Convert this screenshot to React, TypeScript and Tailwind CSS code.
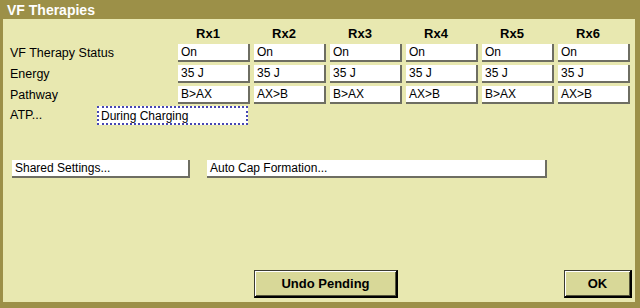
import React from "react";

const font = { fontFamily: '"Liberation Sans", Arial, sans-serif' };

const cols = ["Rx1", "Rx2", "Rx3", "Rx4", "Rx5", "Rx6"];
const rows: { label: string; values: string[] }[] = [
  { label: "VF Therapy Status", values: ["On", "On", "On", "On", "On", "On"] },
  { label: "Energy", values: ["35 J", "35 J", "35 J", "35 J", "35 J", "35 J"] },
  { label: "Pathway", values: ["B>AX", "AX>B", "B>AX", "AX>B", "B>AX", "AX>B"] },
];

function Field({ children }: { children: React.ReactNode }) {
  return (
    <div className="h-[18px] bg-white border-r-2 border-b-2 border-[#6e6e62] pl-[3px] flex items-center text-[12px] text-black leading-none">
      {children}
    </div>
  );
}

export default function App() {
  return (
    <div style={font} className="w-[640px] h-[308px] bg-[#9c9048] flex flex-col overflow-hidden">
      <div className="h-[19px] flex items-center pl-[7px] pt-[1px] text-white font-bold text-[14px] leading-none">
        VF Therapies
      </div>
      <div className="flex-1 ml-[3px] mr-[5px] mb-[6px] bg-[#e8e8b0] flex flex-col pt-[7px] pb-[4px]">
        <div className="grid grid-cols-[164px_repeat(6,72px)] gap-x-[4px] pl-[7px]">
          <div className="h-[14px]" />
          {cols.map((c) => (
            <div key={c} className="h-[14px] flex items-center justify-center pr-[12px] font-bold text-[13px] leading-none text-black">
              {c}
            </div>
          ))}
        </div>
        <div className="grid grid-cols-[164px_repeat(6,72px)] gap-x-[4px] gap-y-[3px] pl-[7px] mt-[4px]">
          {rows.map((r) => (
            <React.Fragment key={r.label}>
              <div className="h-[18px] flex items-center text-[12.5px] text-black leading-none">{r.label}</div>
              {r.values.map((v, i) => (
                <Field key={i}>{v}</Field>
              ))}
            </React.Fragment>
          ))}
        </div>
        <div className="flex items-center pl-[7px] mt-[2px]">
          <div className="w-[87px] text-[12.5px] text-black leading-none">ATP...</div>
          <div className="w-[151px] h-[19px] bg-white border-2 border-dotted border-[#4646b4] pl-[2px] flex items-center text-[12px] text-black leading-none">
            During Charging
          </div>
        </div>
        <div className="flex items-center pl-[9px] mt-[35px] gap-[17px]">
          <div className="w-[178px] h-[18px] bg-white border-r-2 border-b-2 border-[#6e6e62] pl-[3px] flex items-center text-[12px] text-black leading-none">
            Shared Settings...
          </div>
          <div className="w-[340px] h-[18px] bg-white border-r-2 border-b-2 border-[#6e6e62] pl-[3px] flex items-center text-[12px] text-black leading-none">
            Auto Cap Formation...
          </div>
        </div>
        <div className="flex-1" />
        <div className="flex items-end pr-[3px]">
          <div className="ml-[251px] w-[144px] h-[28px] bg-[#d8d898] border border-[#3a3a30] border-r-2 border-b-2 border-r-black border-b-black shadow-[inset_1px_1px_0_#ffffff,inset_-1px_-1px_0_#55553a] flex items-center justify-center font-bold text-[13px] text-black leading-none">
            Undo Pending
          </div>
          <div className="flex-1" />
          <div className="w-[68px] h-[28px] bg-[#d8d898] border border-[#3a3a30] border-r-2 border-b-2 border-r-black border-b-black shadow-[inset_1px_1px_0_#ffffff,inset_-1px_-1px_0_#55553a] flex items-center justify-center font-bold text-[13px] text-black leading-none">
            OK
          </div>
        </div>
      </div>
    </div>
  );
}
